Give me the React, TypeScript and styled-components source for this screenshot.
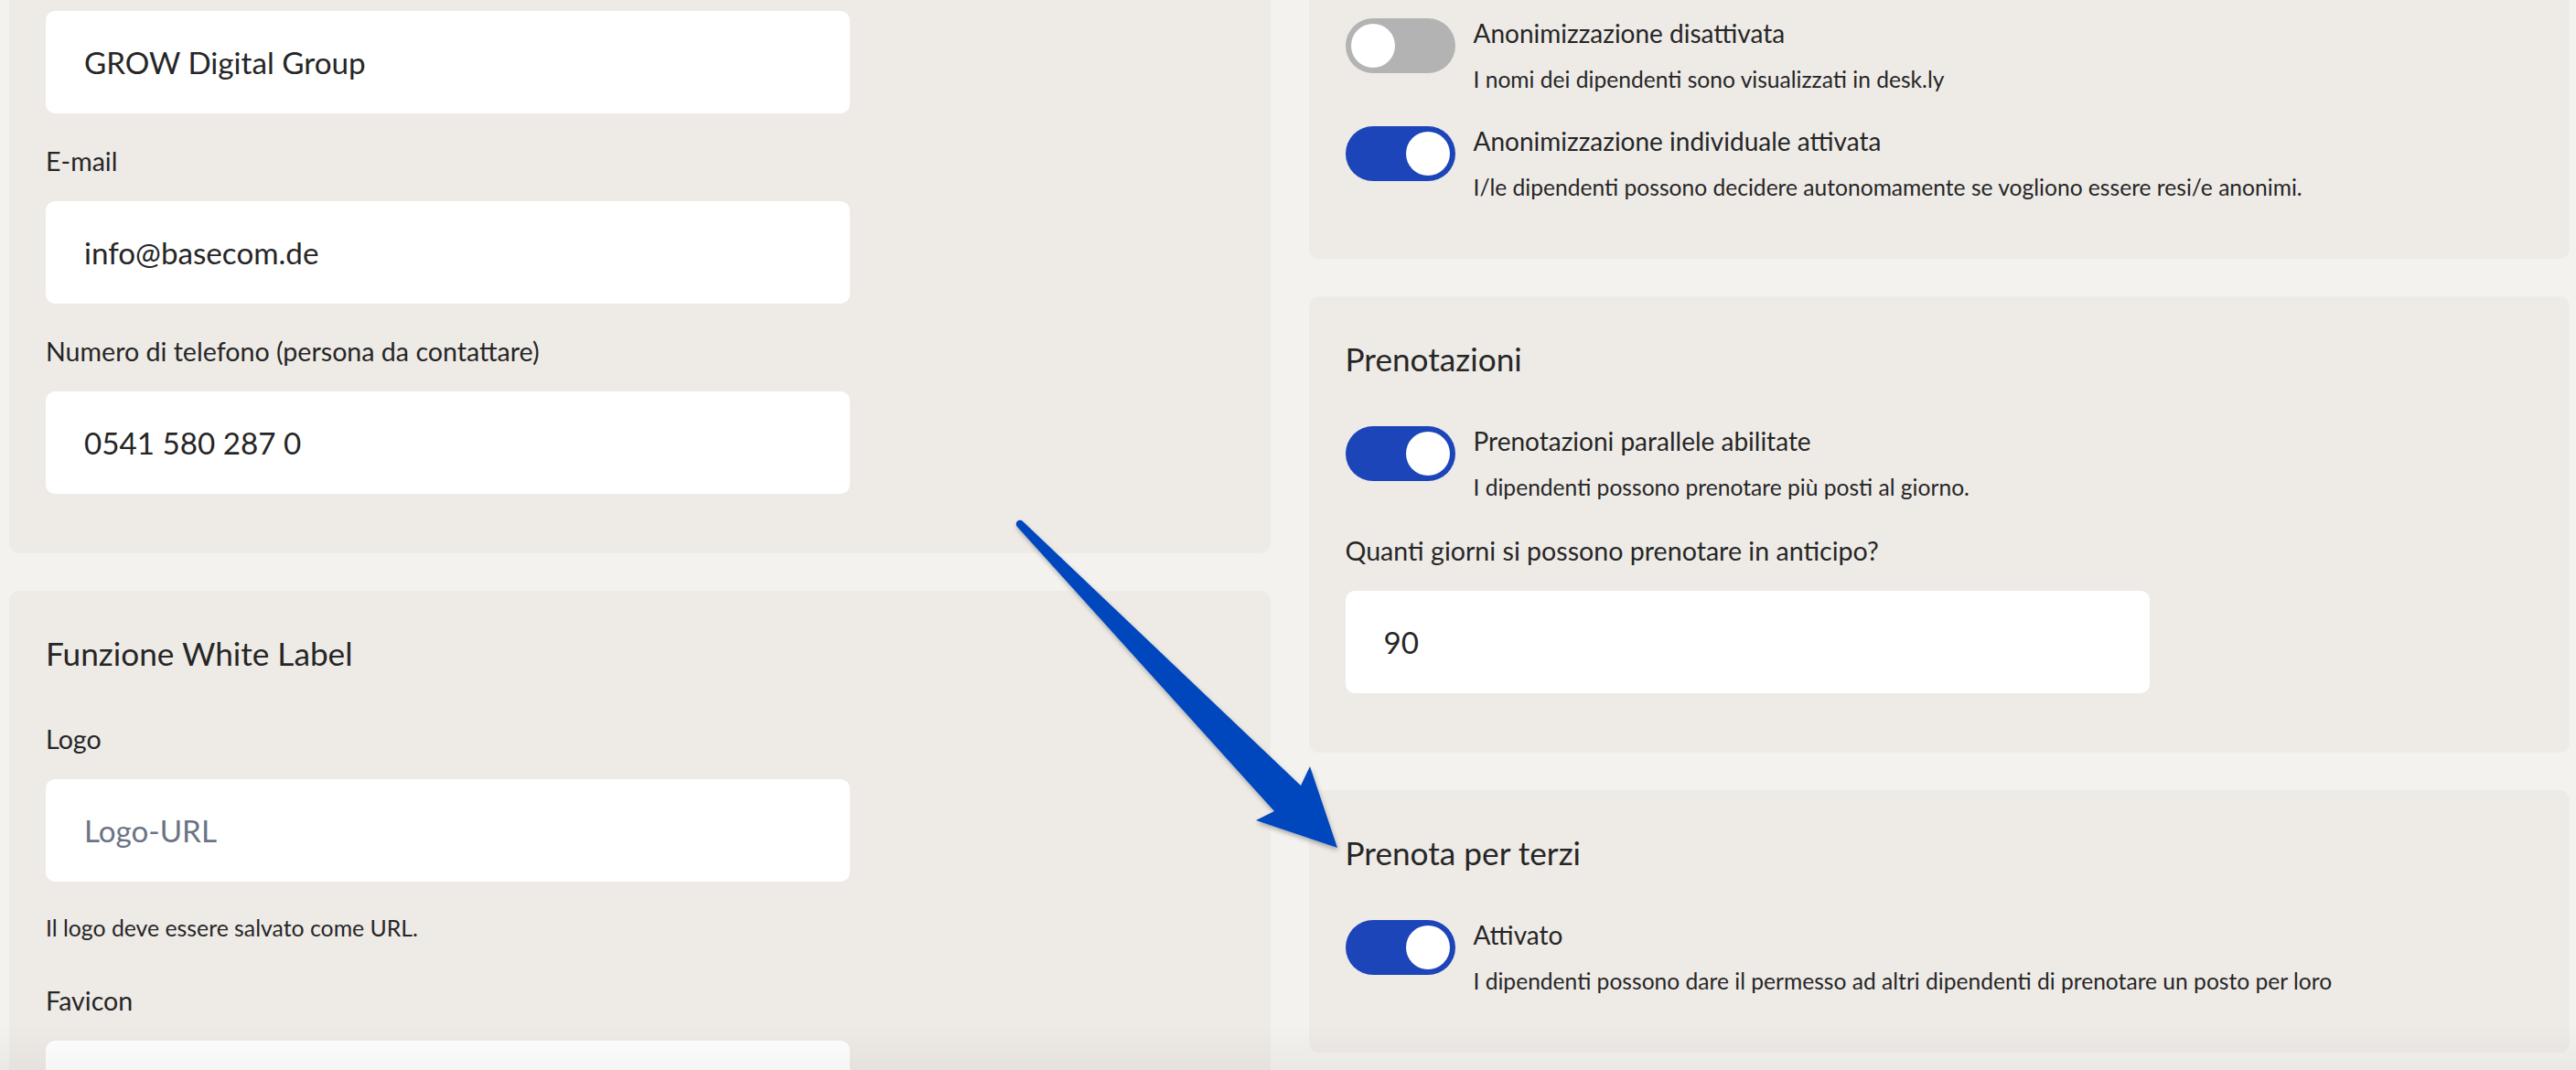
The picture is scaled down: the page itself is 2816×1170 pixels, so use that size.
import React from 'react';
import styled, { createGlobalStyle } from 'styled-components';

const GlobalStyle = createGlobalStyle`
  html, body {
    margin: 0;
    padding: 0;
    background: #f3f2ef;
    overflow: hidden;
  }
  body {
    font-family: Lato, 'Open Sans', sans-serif;
    color: #262626;
  }
  * {
    box-sizing: border-box;
  }
`;

type ToggleProps = { on?: boolean };

const Switch: React.FC<ToggleProps> = ({ on }) => (
  <Track on={on}>
    <Knob />
  </Track>
);

const ToggleSetting: React.FC<{ on?: boolean; title: string; desc: string }> = ({ on, title, desc }) => (
  <ToggleRow>
    <Switch on={on} />
    <ToggleText>
      <ToggleTitle>{title}</ToggleTitle>
      <ToggleDesc>{desc}</ToggleDesc>
    </ToggleText>
  </ToggleRow>
);

const Field: React.FC<{ label?: string; value?: string; placeholder?: string }> = ({
  label,
  value,
  placeholder,
}) => (
  <>
    {label && <Label>{label}</Label>}
    <Input readOnly value={value ?? ''} placeholder={placeholder} />
  </>
);

const App: React.FC = () => {
  return (
    <Viewport>
      <GlobalStyle />
      <Page>
        <Column>
          {/* page is scrolled: the top of this card sits above the window */}
          <Card top={52} bottom={65}>
            <Field value="GROW Digital Group" />
            <Field label="E-mail" value="info@basecom.de" />
            <Field label="Numero di telefono (persona da contattare)" value="0541 580 287 0" />
          </Card>
          <Card bottom={65}>
            <CardTitle>Funzione White Label</CardTitle>
            <Field label="Logo" placeholder="Logo-URL" />
            <Help>Il logo deve essere salvato come URL.</Help>
            <Field label="Favicon" />
          </Card>
        </Column>

        <Column>
          <Card top={28} bottom={59}>
            <ToggleSetting
              title="Anonimizzazione disattivata"
              desc="I nomi dei dipendenti sono visualizzati in desk.ly"
            />
            <ToggleSetting
              on
              title="Anonimizzazione individuale attivata"
              desc="I/le dipendenti possono decidere autonomamente se vogliono essere resi/e anonimi."
            />
          </Card>
          <Card bottom={65}>
            <CardTitle>Prenotazioni</CardTitle>
            <ToggleSetting
              on
              title="Prenotazioni parallele abilitate"
              desc="I dipendenti possono prenotare più posti al giorno."
            />
            <Field label="Quanti giorni si possono prenotare in anticipo?" value="90" />
          </Card>
          <Card bottom={59}>
            <CardTitle>Prenota per terzi</CardTitle>
            <ToggleSetting
              on
              title="Attivato"
              desc="I dipendenti possono dare il permesso ad altri dipendenti di prenotare un posto per loro"
            />
          </Card>
        </Column>
      </Page>

      <ArrowLayer viewBox="0 0 2816 1170" width="2816" height="1170">
        <defs>
          <filter id="arrowShadow" x="-10%" y="-10%" width="120%" height="120%">
            <feDropShadow dx="1" dy="3" stdDeviation="2.5" floodColor="#000" floodOpacity="0.3" />
          </filter>
        </defs>
        <path
          d="M1118 570 L1422 859 L1432 838 L1462 927 L1373 897 L1393 887 L1112 576 A4.2 4.2 0 0 1 1118 570 Z"
          fill="#0047bd"
          filter="url(#arrowShadow)"
        />
      </ArrowLayer>
      <BottomShade />
    </Viewport>
  );
};

const Viewport = styled.div`
  position: relative;
  width: 100%;
  height: 1170px;
  overflow: hidden;
`;

const Page = styled.div`
  display: grid;
  grid-template-columns: 1fr 1fr;
  column-gap: 42px;
  padding: 0 7px 0 10px;
  margin-top: -40px;
`;

const Column = styled.div`
  display: flex;
  flex-direction: column;
  gap: 41px;
`;

const Card = styled.section<{ top?: number; bottom: number }>`
  background: #eeebe7;
  border-radius: 11px;
  padding: ${(p) => p.top ?? 44}px 40px ${(p) => p.bottom}px 40px;
  display: flex;
  flex-direction: column;
  align-items: flex-start;
`;

const CardTitle = styled.h2`
  margin: 0 0 18px;
  font-size: 35.2px;
  line-height: 48px;
  font-weight: 400;
`;

const Label = styled.label`
  display: block;
  margin: 30px 0 22px;
  font-size: 28.6px;
  line-height: 44px;
`;

const Input = styled.input`
  display: block;
  flex: none;
  width: 879px;
  height: 112px;
  border: none;
  outline: none;
  border-radius: 10px;
  background: #ffffff;
  padding: 0 40px 0 42px;
  font-family: Lato, 'Open Sans', sans-serif;
  font-size: 33.2px;
  color: #262626;

  &::placeholder {
    color: #6b7385;
  }
`;

const Help = styled.div`
  margin: 32px 0 8px;
  font-size: 24.8px;
  line-height: 38px;
`;

const ToggleRow = styled.div`
  display: flex;
  align-items: flex-start;
  gap: 20px;
  margin-top: 32px;
  & + label {
    margin-top: 28px;
  }
`;

const Track = styled.div<ToggleProps>`
  flex: none;
  width: 120px;
  height: 60px;
  border-radius: 30px;
  padding: 6px;
  background: ${(p) => (p.on ? '#1c45b9' : '#b3b3b3')};
  display: flex;
  justify-content: ${(p) => (p.on ? 'flex-end' : 'flex-start')};
`;

const Knob = styled.div`
  width: 48px;
  height: 48px;
  border-radius: 50%;
  background: #ffffff;
`;

const ToggleText = styled.div`
  display: flex;
  flex-direction: column;
`;

const ToggleTitle = styled.div`
  font-size: 28px;
  line-height: 32px;
`;

const ToggleDesc = styled.div`
  margin-top: 16px;
  font-size: 24.6px;
  line-height: 38px;
`;

const ArrowLayer = styled.svg`
  position: absolute;
  top: 0;
  left: 0;
  pointer-events: none;
`;

const BottomShade = styled.div`
  position: absolute;
  left: 0;
  right: 0;
  bottom: 0;
  height: 50px;
  pointer-events: none;
  background: linear-gradient(to bottom, rgba(0, 0, 0, 0), rgba(0, 0, 0, 0.04));
`;

export default App;
